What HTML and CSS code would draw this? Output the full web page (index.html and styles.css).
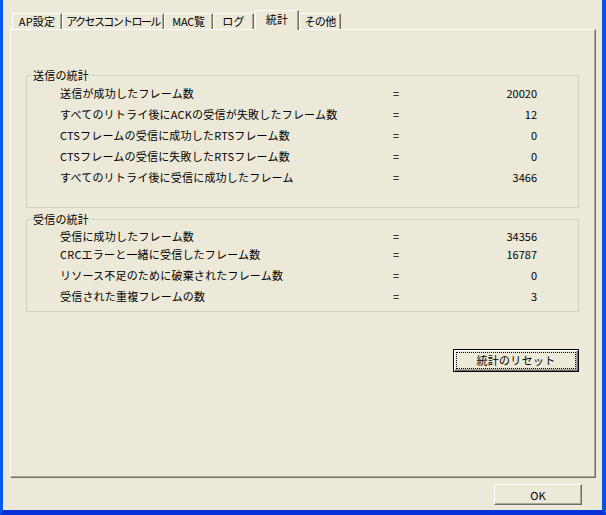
FILE: index.html
```html
<!DOCTYPE html>
<html lang="ja">
<head>
<meta charset="utf-8">
<link rel="stylesheet" href="styles.css">
</head>
<body>
<div class="window">
  <div class="tabs">
    <div class="tab w1">AP設定</div>
    <div class="tab w2">アクセスコントロール</div>
    <div class="tab w3">MAC覧</div>
    <div class="tab w4">ログ</div>
    <div class="tab selected">統計</div>
    <div class="tab w6">その他</div>
  </div>
  <div class="panel">
    <fieldset class="group g1">
      <legend>送信の統計</legend>
      <div class="row"><span class="label">送信が成功したフレーム数</span><span class="eq">=</span><span class="num">20020</span></div>
      <div class="row"><span class="label">すべてのリトライ後にACKの受信が失敗したフレーム数</span><span class="eq">=</span><span class="num">12</span></div>
      <div class="row"><span class="label">CTSフレームの受信に成功したRTSフレーム数</span><span class="eq">=</span><span class="num">0</span></div>
      <div class="row"><span class="label">CTSフレームの受信に失敗したRTSフレーム数</span><span class="eq">=</span><span class="num">0</span></div>
      <div class="row"><span class="label">すべてのリトライ後に受信に成功したフレーム</span><span class="eq">=</span><span class="num">3466</span></div>
    </fieldset>
    <fieldset class="group g2">
      <legend>受信の統計</legend>
      <div class="row r1"><span class="label">受信に成功したフレーム数</span><span class="eq">=</span><span class="num">34356</span></div>
      <div class="row r2"><span class="label">CRCエラーと一緒に受信したフレーム数</span><span class="eq">=</span><span class="num">16787</span></div>
      <div class="row r3"><span class="label">リソース不足のために破棄されたフレーム数</span><span class="eq">=</span><span class="num">0</span></div>
      <div class="row r4"><span class="label">受信された重複フレームの数</span><span class="eq">=</span><span class="num">3</span></div>
    </fieldset>
    <div class="actions">
      <button class="btn reset"><span class="focus">統計のリセット</span></button>
    </div>
  </div>
  <div class="footer">
    <button class="btn ok">OK</button>
  </div>
</div>
</body>
</html>
```
FILE: styles.css
```css
html, body {
  margin: 0;
  padding: 0;
  background: #0054E3;
}
body {
  font-family: "Noto Sans CJK JP", "Noto Sans", sans-serif;
  font-size: 11px;
  color: #000;
}
.window {
  width: 606px;
  height: 515px;
  box-sizing: border-box;
  background: #ECE9D8;
  border-left: 3px solid #0058EE;
  border-right: 4px solid #0054E3;
  border-bottom: 5px solid #0831D9;
  display: flex;
  flex-direction: column;
}
.tabs {
  height: 29px;
  display: flex;
  align-items: flex-end;
  padding-left: 9px;
}
.tab {
  box-sizing: border-box;
  height: 16px;
  line-height: 15px;
  text-align: center;
  white-space: nowrap;
  overflow: hidden;
  border-top: 1px solid #fff;
  border-left: 1px solid #fff;
  border-right: 1px solid #716F64;
  box-shadow: inset -1px 0 0 #ACA899;
  letter-spacing: 0.2px;
}
.w1 { width: 50px; }
.w2 { width: 102px; letter-spacing: -1.6px; }
.w3 { width: 49px; letter-spacing: -0.3px; }
.w4 { width: 41px; }
.w6 { width: 42px; letter-spacing: -0.6px; }
.tab.selected {
  width: 44px;
  height: 20px;
  margin-left: 1px;
  margin-bottom: -1px;
  line-height: 17px;
  padding-bottom: 3px;
  background: #ECE9D8;
  position: relative;
  z-index: 1;
}
.panel {
  box-sizing: border-box;
  height: 449px;
  margin: 0 6px 0 7px;
  border-top: 1px solid #fff;
  border-left: 1px solid #fff;
  border-right: 1px solid #716F64;
  border-bottom: 1px solid #716F64;
  box-shadow: inset -1px -1px 0 #ACA899;
  padding: 38px 16px 0 15px;
  display: flex;
  flex-direction: column;
}
.group {
  margin: 0;
  padding: 1px 0 19px 0;
  border: 1px solid #D0D0BF;
  min-width: 0;
}
.group legend {
  padding: 0 2px;
  margin-left: 4px;
  line-height: 14px;
  height: 14px;
  letter-spacing: 0.2px;
}
.g2 {
  margin-top: 4px;
  padding-bottom: 5px;
}
.row {
  display: grid;
  grid-template-columns: 333px 20px 124px;
  margin-left: 33px;
  height: 21px;
  line-height: 21px;
  letter-spacing: 0.2px;
  white-space: nowrap;
}
.r1 { height: 18px; line-height: 18px; }
.r2 { height: 19px; line-height: 19px; }
.r3 { height: 22px; line-height: 22px; }
.r4 { height: 20px; line-height: 20px; }
.num {
  text-align: right;
  letter-spacing: 0;
}
.actions {
  display: flex;
  justify-content: flex-end;
  margin-top: 37px;
}
.btn {
  font-family: inherit;
  font-size: 11px;
  color: #000;
  background: #ECE9D8;
  padding: 0;
  margin: 0;
  box-sizing: border-box;
  cursor: default;
}
.reset {
  width: 126px;
  height: 23px;
  border: 1px solid #000;
  box-shadow: inset 1px 1px 0 #fff, inset -1px -1px 0 #716F64, inset -2px -2px 0 #ACA899;
  padding: 2px;
  display: flex;
}
.focus {
  flex: 1;
  border: 1px dotted #000;
  line-height: 15px;
  text-align: center;
  letter-spacing: 0.3px;
}
.footer {
  display: flex;
  justify-content: flex-end;
  margin: 6px 20px 0 0;
}
.ok {
  width: 88px;
  height: 21px;
  border-top: 1px solid #fff;
  border-left: 1px solid #fff;
  border-right: 1px solid #716F64;
  border-bottom: 1px solid #716F64;
  box-shadow: inset -1px -1px 0 #ACA899;
  line-height: 18px;
}
```
